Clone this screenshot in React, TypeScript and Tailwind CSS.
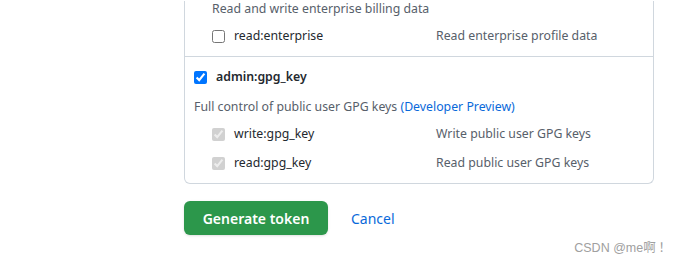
const font = { fontFamily: '"Noto Sans", "Open Sans", sans-serif' };

function ScopeRow({ name, desc, disabled, className }: { name: string; desc: string; disabled?: boolean; className?: string }) {
  return (
    <div className={"flex h-5 items-center " + (className ?? "")}>
      <div className="flex w-[224px] items-center gap-[9px]">
        <input
          type="checkbox"
          defaultChecked={disabled}
          disabled={disabled}
          className="m-0 size-[13px]"
        />
        <span className="text-[12.3px] text-[#24292f]">{name}</span>
      </div>
      <span className="text-[12.3px] text-[#57606a]">{desc}</span>
    </div>
  );
}

export default function App() {
  return (
    <div className="relative h-[266px] w-[685px] overflow-hidden bg-white pt-px" style={font}>
      <div className="ml-[184px] w-[470px] rounded-b-md border-x border-b border-[#d0d7de]">
        <div className="pl-[27px] pb-[10px]">
          <p className="h-4 text-[12.3px] leading-4 text-[#57606a]">Read and write enterprise billing data</p>
          <ScopeRow name="read:enterprise" desc="Read enterprise profile data" className="mt-[9px]" />
        </div>
        <div className="border-t border-[#d0d7de] px-[9px] pt-[10px] pb-[10px]">
          <div className="flex h-5 items-center gap-[9px]">
            <input type="checkbox" defaultChecked className="m-0 size-[13px]" />
            <span className="text-[12.3px] font-semibold text-[#24292f]">admin:gpg_key</span>
          </div>
          <p className="mt-3 h-4 text-[12.3px] leading-4 text-[#57606a]">
            Full control of public user GPG keys <span className="text-[#0969da]">(Developer Preview)</span>
          </p>
          <div className="pl-[18px]">
            <ScopeRow name="write:gpg_key" desc="Write public user GPG keys" disabled className="mt-[9px]" />
            <ScopeRow name="read:gpg_key" desc="Read public user GPG keys" disabled className="mt-[9px]" />
          </div>
        </div>
      </div>
      <div className="ml-[184px] mt-[17px] flex items-center gap-[23px]">
        <button className="h-[34px] w-[144px] rounded-md bg-[#2c974b] text-[14px] font-semibold text-white shadow-sm">
          Generate token
        </button>
        <span className="text-[14px] text-[#0969da]">Cancel</span>
      </div>
      <div
        className="absolute right-[14px] bottom-[8px] text-[12.5px] text-[#a0a0a0]"
        style={{ fontFamily: '"Liberation Sans", "Noto Sans CJK SC", sans-serif' }}
      >
        CSDN @me<span style={{ fontFamily: '"Noto Sans CJK SC", sans-serif' }}>啊 ！</span>
      </div>
    </div>
  );
}
